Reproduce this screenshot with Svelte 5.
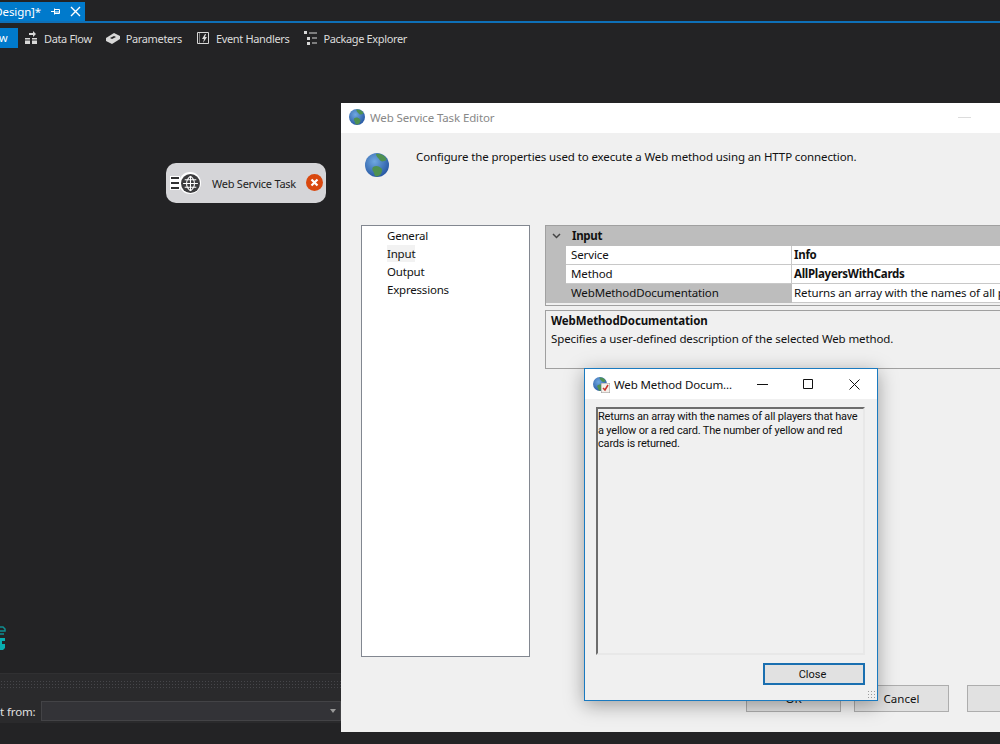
<script>
  const tools = [
    { label: 'Data Flow', icon: 'flow' },
    { label: 'Parameters', icon: 'params' },
    { label: 'Event Handlers', icon: 'events' },
    { label: 'Package Explorer', icon: 'explorer' }
  ];

  const rows = [
    { name: 'Service', value: 'Info', bold: true },
    { name: 'Method', value: 'AllPlayersWithCards', bold: true },
    { name: 'WebMethodDocumentation', value: 'Returns an array with the names of all players that have a yellow', selected: true }
  ];

  const pages = ['General', 'Input', 'Output', 'Expressions'];
</script>

{#snippet globe(size)}
  <svg width={size} height={size} viewBox="0 0 24 24" aria-hidden="true">
    <defs>
      <radialGradient id="sea" cx="0.4" cy="0.35" r="0.75">
        <stop offset="0" stop-color="#6fa8e0" />
        <stop offset="1" stop-color="#1f4f9c" />
      </radialGradient>
    </defs>
    <circle cx="12" cy="12" r="12" fill="url(#sea)" />
    <path d="M11 1c4-1 8 1 10 4 1 2 0 3-2 3-2 1-4 0-5-2-1-1-3-3-3-5zM8 14c3-2 6-1 8 1 2 1 1 4 0 6-2 2-4 3-6 2-1-2-1-4-2-5-1-1-1-3 0-4z" fill="#4f9150" />
  </svg>
{/snippet}

<div class="ide">
  <div class="tabbar">
    <div class="tab">
      <span class="tab-title">[Design]*</span>
      <svg width="11" height="11" viewBox="0 0 11 11" aria-hidden="true"><path d="M1 5.500h3M4.500 2.500v6M4.500 3.500h5v4h-5M5 6h4" fill="none" stroke="#fff" /></svg>
      <svg width="11" height="11" viewBox="0 0 11 11" aria-hidden="true"><path d="M1 1l9 9M10 1l-9 9" fill="none" stroke="#fff" stroke-width="1.400" /></svg>
    </div>
  </div>

  <div class="toolbar">
    <div class="tool active">ow</div>
    {#each tools as tool}
      <div class="tool">
        <svg width="16" height="16" viewBox="0 0 16 16" aria-hidden="true">
          {#if tool.icon === 'flow'}
            <path d="M2 8h5v6H2zM9 8h5v6H9z" fill="#d8d8d8" />
            <path d="M2 10h5M9 10h5" stroke="#252526" />
            <path d="M6 3h4V1l3 3-3 3V5H6z" fill="#d8d8d8" />
          {:else if tool.icon === 'params'}
            <path d="M1 8l8-5 6 3v3l-8 5-6-3z" fill="#d8d8d8" />
            <path d="M5 8l4-2 2 1-4 2z" fill="#252526" />
          {:else if tool.icon === 'events'}
            <path d="M2.500 2.500h11v11h-11z" fill="none" stroke="#d8d8d8" />
            <path d="M4 4h1M4 6h1M4 8h1M4 10h1M4 12h1" stroke="#d8d8d8" />
            <path d="M10 4L7 9h2l-1 4 4-6h-2l1-3z" fill="#d8d8d8" />
          {:else}
            <path d="M2 1h3v3H2zM5 7h3v3H5zM5 12h3v3H5z" fill="#d8d8d8" />
            <path d="M7 3h8M10 8h5M10 13h5" stroke="#d8d8d8" />
          {/if}
        </svg>
        {tool.label}
      </div>
    {/each}
  </div>

  <main class="surface">
    <div class="node">
      <span class="node-lines"></span>
      <span class="node-globe">
        <svg width="19" height="19" viewBox="0 0 18 18" aria-hidden="true">
          <circle cx="9" cy="9" r="9" fill="#3c3c3e" />
          <path d="M9 2v14M2 9h14M3.500 5.500h11M3.500 12.500h11M9 2c-5 4-5 10 0 14M9 2c5 4 5 10 0 14" fill="none" stroke="#fff" stroke-width="1" />
        </svg>
      </span>
      <span class="node-label">Web Service Task</span>
      <span class="node-error">
        <svg width="17" height="17" viewBox="0 0 17 17" aria-hidden="true">
          <circle cx="8.500" cy="8.500" r="8.500" fill="#d9480f" />
          <path d="M5.500 5.500l6 6M11.500 5.500l-6 6" stroke="#fff" stroke-width="2.200" />
        </svg>
      </span>
    </div>
    <svg class="watermark" width="6" height="24" viewBox="0 0 6 24" aria-hidden="true">
      <path d="M0 1h3l2 2v2H0M0 8h4" fill="none" stroke="#0f8f92" stroke-width="1.500" />
      <path d="M0 12h5v3H2v3h3v4l-2 2H0z" fill="#08aeb0" />
    </svg>
  </main>

  <div class="bottom">
    <div class="grip"></div>
    <div class="connect">
      <span class="connect-label">t from:</span>
      <div class="combo"><span class="combo-arrow"></span></div>
    </div>
  </div>

  <section class="editor">
    <header class="editor-title">
      {@render globe(16)}
      <span>Web Service Task Editor</span>
      <span class="title-min"></span>
    </header>
    <div class="editor-intro">
      <span class="intro-globe">{@render globe(24)}</span>
      <p>Configure the properties used to execute a Web method using an HTTP connection.</p>
    </div>
    <div class="editor-main">
      <nav class="pages">
        {#each pages as page}
          <div class="page"><span class:current={page === 'Input'}>{page}</span></div>
        {/each}
      </nav>
      <div class="props">
        <div class="grid">
          <div class="category">
            <svg width="9" height="6" viewBox="0 0 9 6" aria-hidden="true"><path d="M1 1l3.500 3.500L8 1" fill="none" stroke="#444" stroke-width="1.500" /></svg>
            <span>Input</span>
          </div>
          {#each rows as row}
            <div class="row" class:selected={row.selected}>
              <div class="cell-name">{row.name}</div>
              <div class="cell-value" class:bold={row.bold}>{row.value}</div>
            </div>
          {/each}
        </div>
        <div class="help">
          <strong>WebMethodDocumentation</strong>
          <span>Specifies a user-defined description of the selected Web method.</span>
        </div>
      </div>
    </div>
    <div class="editor-actions">
      <button>OK</button>
      <button>Cancel</button>
      <button class="third" aria-label="Help"></button>
    </div>
  </section>

  <section class="doc">
    <header class="doc-title">
      <span class="doc-icon">
        {@render globe(14)}
        <svg class="doc-check" width="9" height="10" viewBox="0 0 9 10" aria-hidden="true">
          <path d="M0 0h9v10H0z" fill="#f4f0ea" stroke="#999" />
          <path d="M2 5l2 2 3-5" fill="none" stroke="#c8322a" stroke-width="1.500" />
        </svg>
      </span>
      <span class="doc-name">Web Method Docum...</span>
      <div class="win-buttons">
        <svg width="11" height="11" viewBox="0 0 11 11" aria-hidden="true"><path d="M0 5.500h11" stroke="#111" /></svg>
        <svg width="11" height="11" viewBox="0 0 11 11" aria-hidden="true"><path d="M.5.500h9v9h-9z" fill="none" stroke="#111" /></svg>
        <svg width="11" height="11" viewBox="0 0 11 11" aria-hidden="true"><path d="M.5.500l10 10M10.500.500l-10 10" stroke="#111" /></svg>
      </div>
    </header>
    <div class="doc-body">
      <div class="doc-text">Returns an array with the names of all players that have a yellow or a red card. The number of yellow and red cards is returned.</div>
      <div class="doc-actions"><button class="doc-close">Close</button></div>
    </div>
    <span class="doc-resize"></span>
  </section>
</div>

<style>
  :global(body) {
    margin: 0;
    background: #232325;
  }

  .ide {
    position: relative;
    width: 1000px;
    height: 744px;
    overflow: hidden;
    display: flex;
    flex-direction: column;
    background: #232325;
    color: #e0e0e0;
    font-family: "Noto Sans", "Open Sans", sans-serif;
    font-size: 11.500px;
    letter-spacing: -0.120px;
  }

  .tabbar {
    height: 19px;
    padding-top: 2px;
    box-sizing: content-box;
    border-bottom: 2px solid #0e70b8;
    display: flex;
    flex: none;
  }

  .tab {
    width: 85px;
    background: #007acc;
    color: #fff;
    display: flex;
    align-items: center;
    justify-content: flex-end;
    gap: 9px;
    padding-right: 4px;
    box-sizing: border-box;
    overflow: hidden;
    white-space: nowrap;
  }

  .tab svg,
  .tab-title {
    flex: none;
  }

  .toolbar {
    height: 30px;
    display: flex;
    align-items: center;
    gap: 13px;
    flex: none;
    font-size: 11px;
    letter-spacing: -0.350px;
  }

  .tool {
    display: flex;
    align-items: center;
    gap: 5px;
    white-space: nowrap;
    color: #dcdcdc;
  }

  .tool.active {
    display: block;
    background: #007acc;
    color: #fff;
    width: 18px;
    height: 20px;
    line-height: 20px;
    margin-right: -8px;
    overflow: hidden;
    text-indent: -7px;
  }

  .surface {
    position: relative;
    flex: 1;
  }

  .node {
    position: absolute;
    left: 166px;
    top: 110px;
    width: 160px;
    height: 40px;
    border-radius: 10px;
    background: #d5d5d8;
    color: #222;
    display: flex;
    align-items: center;
    padding-left: 4px;
    box-sizing: border-box;
    font-size: 11px;
    letter-spacing: -0.250px;
  }

  .node-lines {
    width: 8px;
    height: 12px;
    background: repeating-linear-gradient(#333 0 2px, #fff 2px 5px);
    border: 1px solid #fff;
    flex: none;
  }

  .node-globe {
    display: flex;
    margin-left: -1px;
    padding: 1.500px;
    border-radius: 50%;
    background: #fff;
  }

  .node-label {
    margin-left: 11px;
    white-space: nowrap;
  }

  .node-error {
    display: flex;
    position: absolute;
    right: 3px;
    top: 11px;
  }

  .watermark {
    position: absolute;
    left: 0;
    top: 573px;
  }

  .bottom {
    height: 50px;
    margin-bottom: 21px;
    flex: none;
    background: #2a2a2c;
    border-top: 1px solid #303032;
    box-sizing: border-box;
  }

  .grip {
    margin-top: 6px;
    height: 8px;
    background-image: radial-gradient(#46464a 0.6px, transparent 0.7px);
    background-size: 3px 3px;
  }

  .connect {
    margin-top: 13px;
    display: flex;
    align-items: center;
    gap: 6px;
  }

  .connect-label {
    width: 35px;
    text-align: right;
    white-space: nowrap;
  }

  .combo {
    width: 300px;
    height: 20px;
    position: relative;
    background: #333337;
    border: 1px solid #434346;
    box-sizing: border-box;
  }

  .combo-arrow {
    position: absolute;
    right: 4px;
    top: 7px;
    border: 3px solid transparent;
    border-top: 4px solid #999;
  }

  .editor {
    position: absolute;
    left: 341px;
    top: 103px;
    width: 680px;
    height: 629px;
    display: flex;
    flex-direction: column;
    background: #f0f0f0;
    color: #111;
  }

  .editor-title {
    position: relative;
    height: 30px;
    flex: none;
    background: #fff;
    display: flex;
    align-items: center;
    gap: 5px;
    padding: 0 0 2px 8px;
    box-sizing: border-box;
    color: #888;
  }

  .title-min {
    position: absolute;
    left: 617px;
    top: 14px;
    width: 13px;
    height: 1px;
    background: #dcdcdc;
  }

  .editor-intro {
    height: 92px;
    flex: none;
    display: flex;
    gap: 27px;
    padding: 16px 0 0 24px;
    box-sizing: border-box;
  }

  .editor-intro p {
    margin: 0;
    line-height: 16px;
    white-space: nowrap;
  }

  .intro-globe {
    margin-top: 4px;
  }

  .editor-main {
    flex: 1;
    display: flex;
    gap: 15px;
    padding-left: 20px;
    min-height: 0;
  }

  .pages {
    width: 169px;
    height: 432px;
    background: #fff;
    border: 1px solid #828790;
    box-sizing: border-box;
    padding-top: 1px;
    letter-spacing: -0.200px;
  }

  .page {
    height: 18px;
    padding-left: 25px;
    line-height: 17px;
  }

  .page .current {
    background: #f2f2f2;
    display: inline-block;
  }

  .props {
    width: 470px;
    flex: none;
  }

  .grid {
    height: 81px;
    background: #f0f0f0;
    border: 1px solid #a0a0a0;
    box-sizing: border-box;
  }

  .category {
    height: 20px;
    background: #bdbdbd;
    display: flex;
    align-items: center;
    gap: 11px;
    padding: 0 0 1px 6px;
    box-sizing: border-box;
    font-weight: 700;
    letter-spacing: -0.300px;
  }

  .row {
    display: flex;
    height: 19px;
    padding-left: 20px;
    background: #bdbdbd;
    line-height: 18px;
  }

  .cell-name {
    width: 226px;
    padding-left: 5px;
    box-sizing: border-box;
    background: #fff;
    border-bottom: 1px solid #c8c8c8;
    border-right: 1px solid #c8c8c8;
  }

  .cell-value {
    flex: 1;
    background: #fff;
    border-bottom: 1px solid #c8c8c8;
    padding-left: 2px;
    white-space: nowrap;
    overflow: hidden;
  }

  .cell-value.bold {
    font-weight: 700;
    letter-spacing: -0.280px;
  }

  .row.selected .cell-name {
    background: #bdbdbd;
    border-color: #bdbdbd;
  }

  .help {
    margin-top: 4px;
    height: 59px;
    border: 1px solid #a0a0a0;
    box-sizing: border-box;
    padding: 1px 5px;
    display: flex;
    flex-direction: column;
    line-height: 18px;
  }

  .editor-actions {
    height: 47px;
    flex: none;
    display: flex;
    gap: 13px;
    padding-left: 405px;
    box-sizing: border-box;
  }

  .editor-actions button {
    flex: none;
    width: 95px;
    height: 27px;
    background: #e1e1e1;
    border: 1px solid #adadad;
    font: inherit;
    color: inherit;
  }

  .editor-actions .third {
    margin-left: 5px;
  }

  .doc {
    position: absolute;
    left: 584px;
    top: 368px;
    width: 294px;
    height: 333px;
    background: #f0f0f0;
    border: 1px solid #1a7ac0;
    box-sizing: border-box;
    display: flex;
    flex-direction: column;
    color: #111;
    box-shadow: 0 4px 18px rgba(0, 0, 0, 0.35);
  }

  .doc-title {
    height: 30px;
    flex: none;
    background: #fff;
    display: flex;
    align-items: center;
    padding-left: 8px;
    white-space: nowrap;
  }

  .doc-icon {
    position: relative;
    display: flex;
    margin-right: 7px;
  }

  .doc-check {
    position: absolute;
    right: -3px;
    bottom: -2px;
  }

  .win-buttons {
    margin-left: auto;
    margin-right: 17px;
    display: flex;
    gap: 35px;
  }

  .doc-body {
    flex: 1;
    display: flex;
    flex-direction: column;
    padding: 8px 12px 14px 11px;
    min-height: 0;
  }

  .doc-text {
    height: 248px;
    flex: none;
    box-sizing: border-box;
    border: 2px solid;
    border-color: #6d6d6d #e8e8e8 #e8e8e8 #6d6d6d;
    padding: 1px 0 0 0;
    font-family: Roboto, "Liberation Sans", sans-serif;
    font-size: 11px;
    letter-spacing: -0.180px;
    line-height: 13.500px;
  }

  .doc-actions {
    display: flex;
    justify-content: flex-end;
    margin-top: 8px;
  }

  .doc-close {
    width: 102px;
    height: 22px;
    padding: 0 3px 0 0;
    background: #e1e1e1;
    border: 2px solid #1a6fb0;
    font-family: Roboto, "Liberation Sans", sans-serif;
    font-size: 11px;
    color: #111;
  }

  .doc-resize {
    position: absolute;
    right: 1px;
    bottom: 1px;
    width: 9px;
    height: 9px;
    background-image: radial-gradient(#9c9c9c 0.9px, transparent 1px);
    background-size: 3px 3px;
  }
</style>
